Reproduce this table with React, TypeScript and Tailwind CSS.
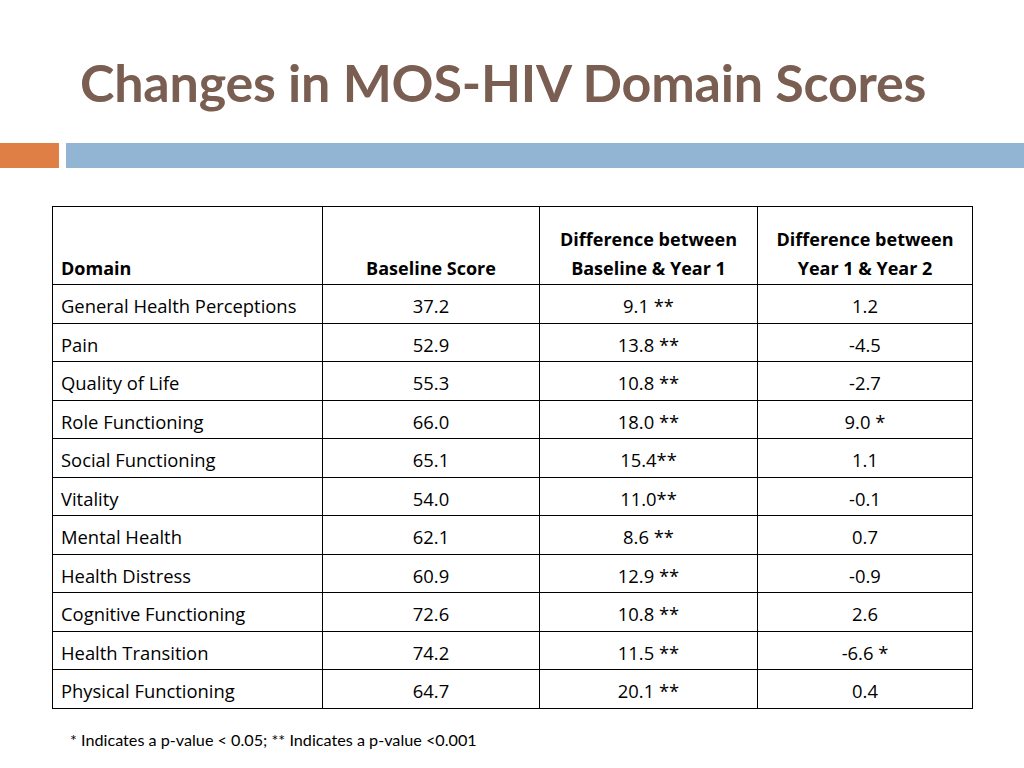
const rows: [string, string, string, string][] = [
  ["General Health Perceptions", "37.2", "9.1 **", "1.2"],
  ["Pain", "52.9", "13.8 **", "-4.5"],
  ["Quality of Life", "55.3", "10.8 **", "-2.7"],
  ["Role Functioning", "66.0", "18.0 **", "9.0 *"],
  ["Social Functioning", "65.1", "15.4**", "1.1"],
  ["Vitality", "54.0", "11.0**", "-0.1"],
  ["Mental Health", "62.1", "8.6 **", "0.7"],
  ["Health Distress", "60.9", "12.9 **", "-0.9"],
  ["Cognitive Functioning", "72.6", "10.8 **", "2.6"],
  ["Health Transition", "74.2", "11.5 **", "-6.6 *"],
  ["Physical Functioning", "64.7", "20.1 **", "0.4"],
];

export default function App() {
  return (
    <div className="w-[1024px] h-[768px] bg-white overflow-hidden relative font-['Open_Sans',sans-serif]">
      {/* title */}
      <h1 className="pl-[80px] pt-[46px] h-[143px] text-[52px] leading-[72px] font-bold text-[#7a5e51] font-['Lato',sans-serif] tracking-[-0.2px]">
        Changes in MOS-HIV Domain Scores
      </h1>

      {/* accent bars */}
      <div className="flex gap-[7px] h-[25px]">
        <div className="w-[59px] bg-[#e07f45]" />
        <div className="flex-1 bg-[#92b5d3]" />
      </div>

      {/* table */}
      <div className="pl-[52px] pt-[38px]">
        <table className="w-[920px] border-collapse text-[18.4px] text-black table-fixed">
          <colgroup>
            <col className="w-[270px]" />
            <col className="w-[217px]" />
            <col className="w-[218px]" />
            <col className="w-[215px]" />
          </colgroup>
          <thead>
            <tr className="h-[78px]">
              <th className="border border-black align-bottom text-left px-[8px] pb-[1px] font-bold text-[18px] leading-[29px]">Domain</th>
              <th className="border border-black align-bottom text-center pb-[1px] font-bold text-[18px] leading-[29px]">Baseline Score</th>
              <th className="border border-black align-bottom text-center pb-[1px] font-bold text-[18px] leading-[29px]">
                Difference between
                <br />
                Baseline &amp; Year 1
              </th>
              <th className="border border-black align-bottom text-center pb-[1px] font-bold text-[18px] leading-[29px]">
                Difference between
                <br />
                Year 1 &amp; Year 2
              </th>
            </tr>
          </thead>
          <tbody>
            {rows.map((r) => (
              <tr key={r[0]} className="h-[38.5px]">
                <td className="border border-black px-[8px] pt-[5px] leading-[24px]">{r[0]}</td>
                <td className="border border-black text-center pt-[5px] leading-[24px]">{r[1]}</td>
                <td className="border border-black text-center pt-[5px] leading-[24px]">{r[2]}</td>
                <td className="border border-black text-center pt-[5px] leading-[24px]">{r[3]}</td>
              </tr>
            ))}
          </tbody>
        </table>
      </div>

      <p className="pl-[70px] pt-[19px] text-[16.2px] text-black font-['Lato',sans-serif]">
        * Indicates a p-value &lt; 0.05; ** Indicates a p-value &lt;0.001
      </p>
    </div>
  );
}
